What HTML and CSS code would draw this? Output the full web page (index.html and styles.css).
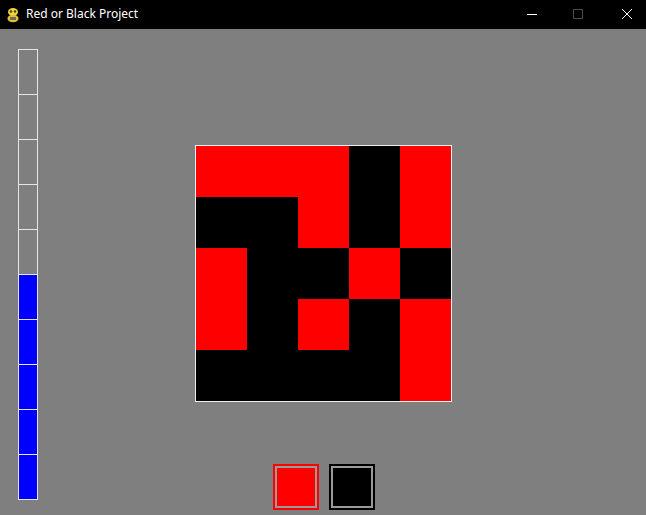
FILE: index.html
```html
<!DOCTYPE html>
<html>
<head>
<meta charset="utf-8">
<link rel="stylesheet" href="styles.css">
</head>
<body>
<div class="window">
  <div class="titlebar">
    <div class="title-left">
      <svg class="app-icon" width="16" height="16" viewBox="0 0 16 16">
        <ellipse cx="8" cy="5" rx="5" ry="4" fill="#f2d43a"/>
        <ellipse cx="8" cy="11.5" rx="5.5" ry="3.8" fill="#e8c22c"/>
        <circle cx="6" cy="4.5" r="1.2" fill="#3a3a3a"/>
        <circle cx="10" cy="4.5" r="1.2" fill="#3a3a3a"/>
        <rect x="5" y="10" width="6" height="3" fill="#6b6b6b"/>
      </svg>
      <span class="title-text">Red or Black Project</span>
    </div>
    <div class="controls">
      <div class="ctl ctl-min"><svg width="12" height="12" viewBox="0 0 12 12"><line x1="1" y1="6.5" x2="11" y2="6.5" stroke="#fff" stroke-width="1"/></svg></div>
      <div class="ctl ctl-max"><svg width="12" height="12" viewBox="0 0 12 12"><rect x="1.5" y="1.5" width="9" height="9" fill="none" stroke="#4a4a4a" stroke-width="1"/></svg></div>
      <div class="ctl ctl-close"><svg width="12" height="12" viewBox="0 0 12 12"><path d="M1 1 L11 11 M11 1 L1 11" stroke="#fff" stroke-width="1"/></svg></div>
    </div>
  </div>
  <div class="stage">
    <div class="meter">
      <div class="cell"></div>
      <div class="cell"></div>
      <div class="cell"></div>
      <div class="cell"></div>
      <div class="cell"></div>
      <div class="cell on"></div>
      <div class="cell on"></div>
      <div class="cell on"></div>
      <div class="cell on"></div>
      <div class="cell on last"></div>
    </div>
    <div class="center">
      <div class="board">
        <div class="sq r"></div><div class="sq r"></div><div class="sq r"></div><div class="sq b"></div><div class="sq r"></div>
        <div class="sq b"></div><div class="sq b"></div><div class="sq r"></div><div class="sq b"></div><div class="sq r"></div>
        <div class="sq r"></div><div class="sq b"></div><div class="sq b"></div><div class="sq r"></div><div class="sq b"></div>
        <div class="sq r"></div><div class="sq b"></div><div class="sq r"></div><div class="sq b"></div><div class="sq r"></div>
        <div class="sq b"></div><div class="sq b"></div><div class="sq b"></div><div class="sq b"></div><div class="sq r"></div>
      </div>
      <div class="picks">
        <div class="pick pick-red"><div class="pick-fill"></div></div>
        <div class="pick pick-black"><div class="pick-fill"></div></div>
      </div>
    </div>
  </div>
</div>
</body>
</html>
```

FILE: styles.css
```css
* { box-sizing: border-box; }
html, body { margin: 0; padding: 0; }
body {
  width: 646px;
  height: 515px;
  overflow: hidden;
  background: #808080;
  font-family: "Segoe UI", "Noto Sans", "Open Sans", sans-serif;
}
.window {
  width: 646px;
  height: 515px;
  display: flex;
  flex-direction: column;
}
.titlebar {
  height: 29px;
  background: #000;
  display: flex;
  align-items: center;
  justify-content: space-between;
  flex-shrink: 0;
}
.title-left {
  display: flex;
  align-items: center;
  padding-left: 5px;
  gap: 5px;
}
.app-icon { display: block; }
.title-text {
  color: #fff;
  font-size: 12px;
  line-height: 16px;
  padding-bottom: 1px;
}
.controls {
  display: flex;
  align-items: center;
  height: 29px;
  padding-right: 13px;
}
.ctl {
  width: 12px;
  height: 29px;
  display: flex;
  align-items: center;
  justify-content: center;
}
.ctl-max { margin-left: 34px; }
.ctl-close { margin-left: 37px; }
.ctl svg { display: block; margin-top: -2px; }
.stage {
  flex: 1;
  display: flex;
  align-items: flex-start;
  padding: 20px 0 0 18px;
  background: #7f7f7f;
}
.meter {
  width: 20px;
  display: flex;
  flex-direction: column;
}
.cell {
  height: 45px;
  border: 1px solid #e6e6e6;
  border-bottom: none;
  background: transparent;
}
.cell.last {
  height: 46px;
  border-bottom: 1px solid #e6e6e6;
}
.cell.on { background: #0000ff; }
.center {
  margin-left: 157px;
  margin-top: 96px;
  display: flex;
  flex-direction: column;
}
.board {
  width: 257px;
  height: 257px;
  border: 1px solid #f0f0f0;
  display: grid;
  grid-template-columns: repeat(5, 51px);
  grid-template-rows: repeat(5, 51px);
}
.sq.r { background: #ff0000; }
.sq.b { background: #000000; }
.picks {
  display: flex;
  gap: 10px;
  margin-top: 62px;
  margin-left: 78px;
}
.pick {
  width: 46px;
  height: 46px;
  padding: 2px;
}
.pick-fill {
  width: 100%;
  height: 100%;
  border: 2px solid #9a9a9a;
}
.pick-red { background: #ff0000; }
.pick-red .pick-fill { background: #ff0000; }
.pick-black { background: #000; }
.pick-black .pick-fill { background: #000; }
```
